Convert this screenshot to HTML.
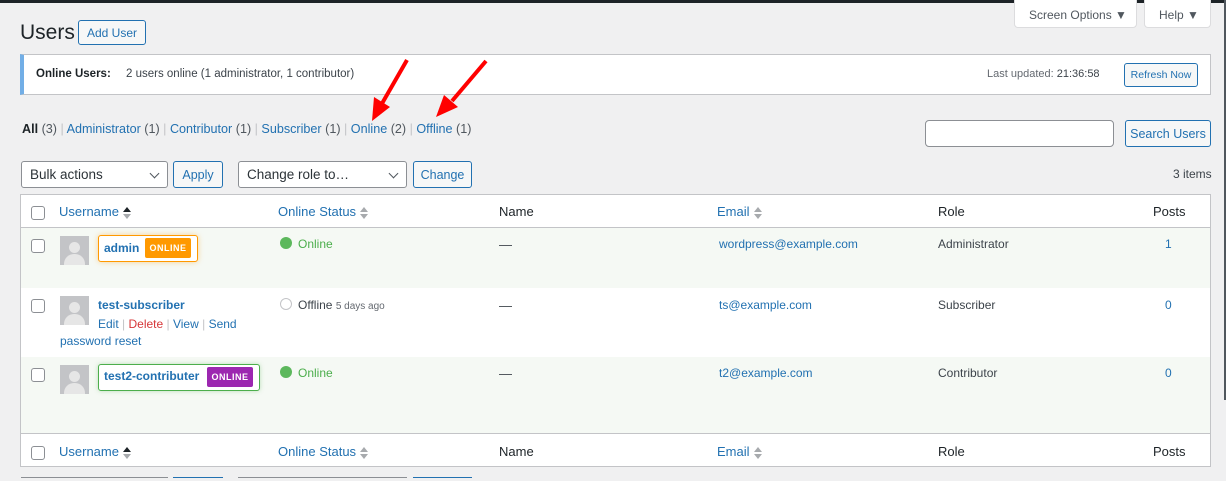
<!DOCTYPE html>
<html><head><meta charset="utf-8"><style>
*{box-sizing:border-box;margin:0;padding:0}
body{width:1226px;height:479px;overflow:hidden;background:#f0f0f1;font-family:"Liberation Sans",sans-serif;font-size:13px;color:#3c434a;position:relative}
.a{position:absolute;white-space:nowrap}
a,.l{color:#2271b1;text-decoration:none}
.btn{position:absolute;border:1px solid #2271b1;color:#2271b1;background:#f6f7f7;border-radius:3px;font-size:12px;display:flex;align-items:center;justify-content:center}
.sel{position:absolute;border:1px solid #8c8f94;background:#fff;border-radius:3px;padding-left:8px;display:flex;align-items:center;font-size:13.5px;color:#2c3338}
.sel:after{content:"";position:absolute;right:9px;top:8px;width:6px;height:6px;border-right:1.5px solid #50575e;border-bottom:1.5px solid #50575e;transform:rotate(45deg)}
.cb{position:absolute;width:14px;height:14px;border:1px solid #8c8f94;border-radius:3px;background:#fff}
.av{position:absolute;width:29px;height:29px;background:#c3c4c7;overflow:hidden}
.av:before{content:"";position:absolute;left:9px;top:6px;width:11px;height:11px;border-radius:50%;background:#e6e6e6}
.av:after{content:"";position:absolute;left:4px;top:18px;width:21px;height:14px;border-radius:10px 10px 0 0;background:#e6e6e6}
.sort{display:inline-block;vertical-align:middle;margin-left:4px;width:8px;height:12px;position:relative}
.sort:before{content:"";position:absolute;top:0;left:0;border:4px solid transparent;border-bottom:5px solid #a7aaad;border-top:0}
.sort:after{content:"";position:absolute;bottom:0;left:0;border:4px solid transparent;border-top:5px solid #a7aaad;border-bottom:0}
.sort.up:before{border-bottom-color:#1d2327}
.dot{display:inline-block;width:12px;height:12px;border-radius:50%;background:#5cb85c;vertical-align:-1px;margin-right:6px}
.on{color:#4cae4c;font-size:12px}
</style></head><body>
<div class="a" style="left:0;top:0;width:1226px;height:3px;background:#1d2327"></div>
<div class="a" style="left:1014px;top:0;width:123px;height:28px;background:#fff;border:1px solid #dcdcde;border-top:0;border-radius:0 0 4px 4px;font-size:12px;color:#50575e;padding:8px 0 0 14px">Screen Options ▼</div>
<div class="a" style="left:1144px;top:0;width:67px;height:28px;background:#fff;border:1px solid #dcdcde;border-top:0;border-radius:0 0 4px 4px;font-size:12px;color:#50575e;padding:8px 0 0 14px">Help ▼</div>
<div class="a" style="left:20px;top:21px;font-size:21px;color:#1d2327">Users</div>
<div class="btn" style="left:78px;top:20px;width:68px;height:25px;font-size:12px">Add User</div>
<div class="a" style="left:20px;top:54px;width:1191px;height:41px;background:#fff;border:1px solid #c3c4c7;border-left:4px solid #72aee6"></div>
<div class="a" style="left:36px;top:68px;font-size:11.5px;font-weight:bold;color:#1d2327">Online Users:</div>
<div class="a" style="left:126px;top:68px;font-size:11.5px">2 users online (1 administrator, 1 contributor)</div>
<div class="a" style="left:987px;top:68px;font-size:11px;color:#646970">Last updated: <span style="color:#3c434a">21:36:58</span></div>
<div class="btn" style="left:1124px;top:63px;width:74px;height:24px;font-size:10.5px">Refresh Now</div>
<svg class="a" style="left:360px;top:55px" width="140" height="70"><g fill="none" stroke="#f00" stroke-width="4"><line x1="47" y1="5" x2="20" y2="52"/><line x1="126" y1="6" x2="92" y2="46"/></g><polygon points="12,66 14,42 30,52" fill="#f00"/><polygon points="76,62 84,40 98,52" fill="#f00"/></svg>
<div class="a" style="left:22px;top:122px;font-size:12.6px;color:#50575e"><b style="color:#1d2327">All</b> (3) <span style="color:#c3c4c7">|</span> <a>Administrator</a> (1) <span style="color:#c3c4c7">|</span> <a>Contributor</a> (1) <span style="color:#c3c4c7">|</span> <a>Subscriber</a> (1) <span style="color:#c3c4c7">|</span> <a>Online</a> (2) <span style="color:#c3c4c7">|</span> <a>Offline</a> (1)</div>
<div class="a" style="left:925px;top:120px;width:189px;height:27px;background:#fff;border:1px solid #8c8f94;border-radius:4px"></div>
<div class="btn" style="left:1125px;top:120px;width:86px;height:27px;font-size:12.5px">Search Users</div>
<div class="sel" style="left:21px;top:161px;width:147px;height:27px">Bulk actions</div>
<div class="btn" style="left:173px;top:161px;width:50px;height:27px;font-size:12.5px">Apply</div>
<div class="sel" style="left:238px;top:161px;width:169px;height:27px">Change role to…</div>
<div class="btn" style="left:413px;top:161px;width:59px;height:27px;font-size:12.5px">Change</div>
<div class="a" style="left:1173px;top:167px;font-size:12px">3 items</div>
<div class="a" style="left:20px;top:194px;width:1191px;height:273px;background:#fff;border:1px solid #c3c4c7"></div>
<div class="a" style="left:21px;top:227px;width:1189px;height:1px;background:#c3c4c7"></div>
<div class="a" style="left:21px;top:228px;width:1189px;height:60px;background:#f5f9f4"></div>
<div class="a" style="left:21px;top:357px;width:1189px;height:77px;background:#f5f9f4"></div>
<div class="a" style="left:21px;top:433px;width:1189px;height:1px;background:#c3c4c7"></div>
<div class="cb" style="left:31px;top:206px"></div>
<div class="a l" style="left:59px;top:204px;font-size:13px">Username<span class="sort up"></span></div>
<div class="a l" style="left:278px;top:204px">Online Status<span class="sort"></span></div>
<div class="a" style="left:499px;top:204px;color:#1d2327">Name</div>
<div class="a l" style="left:717px;top:204px">Email<span class="sort"></span></div>
<div class="a" style="left:938px;top:204px;color:#1d2327">Role</div>
<div class="a" style="left:1153px;top:204px;color:#1d2327">Posts</div>
<div class="cb" style="left:31px;top:446px"></div>
<div class="a l" style="left:59px;top:444px">Username<span class="sort up"></span></div>
<div class="a l" style="left:278px;top:444px">Online Status<span class="sort"></span></div>
<div class="a" style="left:499px;top:444px;color:#1d2327">Name</div>
<div class="a l" style="left:717px;top:444px">Email<span class="sort"></span></div>
<div class="a" style="left:938px;top:444px;color:#1d2327">Role</div>
<div class="a" style="left:1153px;top:444px;color:#1d2327">Posts</div>
<div class="cb" style="left:31px;top:239px"></div>
<div class="av" style="left:60px;top:236px"></div>
<div class="a" style="left:98px;top:235px;width:100px;height:27px;border:1px solid #f90;border-radius:3px;background:#fff;box-shadow:0 0 6px rgba(255,153,0,.4)"></div>
<div class="a l" style="left:104px;top:241px;font-weight:bold;font-size:12px">admin</div>
<div class="a" style="left:145px;top:238px;width:46px;height:20px;background:#f90;color:#fff;font-size:9px;font-weight:bold;border-radius:2px;text-align:center;line-height:20px;letter-spacing:.5px">ONLINE</div>
<div class="a on" style="left:280px;top:237px"><span class="dot"></span>Online</div>
<div class="a" style="left:499px;top:237px">—</div>
<div class="a l" style="left:719px;top:237px;font-size:12px">wordpress@example.com</div>
<div class="a" style="left:938px;top:237px;font-size:12px">Administrator</div>
<div class="a l" style="left:1165px;top:237px;font-size:12px">1</div>
<div class="cb" style="left:31px;top:299px"></div>
<div class="av" style="left:60px;top:296px"></div>
<div class="a l" style="left:98px;top:298px;font-weight:bold;font-size:12px">test-subscriber</div>
<div class="a" style="left:98px;top:317px;font-size:12px;color:#c3c4c7"><a>Edit</a> | <span style="color:#d63638">Delete</span> | <a>View</a> | <a>Send</a></div>
<div class="a l" style="left:60px;top:334px;font-size:12px">password reset</div>
<div class="a" style="left:280px;top:298px;font-size:12px"><span class="dot" style="background:#fff;border:1px solid #c3c4c7"></span>Offline <span style="font-size:10px;color:#646970">5 days ago</span></div>
<div class="a" style="left:499px;top:298px">—</div>
<div class="a l" style="left:719px;top:298px;font-size:12px">ts@example.com</div>
<div class="a" style="left:938px;top:298px;font-size:12px">Subscriber</div>
<div class="a l" style="left:1165px;top:298px;font-size:12px">0</div>
<div class="cb" style="left:31px;top:368px"></div>
<div class="av" style="left:60px;top:365px"></div>
<div class="a" style="left:98px;top:364px;width:162px;height:27px;border:1px solid #4cae4c;border-radius:3px;background:#fff;box-shadow:0 0 5px rgba(76,174,76,.35)"></div>
<div class="a l" style="left:104px;top:369px;font-weight:bold;font-size:12px">test2-contributer</div>
<div class="a" style="left:207px;top:367px;width:46px;height:20px;background:#9c27b0;color:#fff;font-size:9px;font-weight:bold;border-radius:2px;text-align:center;line-height:20px;letter-spacing:.5px">ONLINE</div>
<div class="a on" style="left:280px;top:366px"><span class="dot"></span>Online</div>
<div class="a" style="left:499px;top:366px">—</div>
<div class="a l" style="left:719px;top:366px;font-size:12px">t2@example.com</div>
<div class="a" style="left:938px;top:366px;font-size:12px">Contributor</div>
<div class="a l" style="left:1165px;top:366px;font-size:12px">0</div>
<div class="a" style="left:21px;top:477px;width:147px;height:4px;border-top:1px solid #8c8f94"></div>
<div class="a" style="left:173px;top:477px;width:50px;height:4px;border-top:1px solid #2271b1"></div>
<div class="a" style="left:238px;top:477px;width:169px;height:4px;border-top:1px solid #8c8f94"></div>
<div class="a" style="left:413px;top:477px;width:59px;height:4px;border-top:1px solid #2271b1"></div>
<div class="a" style="left:1224px;top:0;width:2px;height:400px;background:#50575e"></div>
</body></html>
